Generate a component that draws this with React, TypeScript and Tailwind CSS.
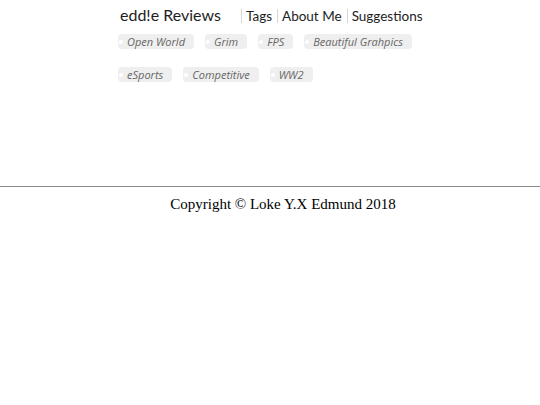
import React from 'react';

// 標籤資料：兩行
const tagRows: string[][] = [
  ['Open World', 'Grim', 'FPS', 'Beautiful Grahpics'],
  ['eSports', 'Competitive', 'WW2'],
];

const navLinks = ['Tags', 'About Me', 'Suggestions'];

const Tag: React.FC<{ label: string }> = ({ label }) => (
  <span
    className="relative inline-flex h-[15px] items-center whitespace-nowrap rounded-[4px] bg-[#efefef] pl-[9px] pr-[9px] text-[11px] italic leading-none text-[#666]"
    style={{ fontFamily: '"Open Sans", Lato, sans-serif' }}
  >
    {/* 左側小白點 */}
    <span className="absolute left-[1px] top-[6px] h-[4px] w-[4px] rounded-full bg-white" />
    {label}
  </span>
);

const App: React.FC = () => {
  return (
    <div className="min-h-[405px] w-full bg-white" style={{ fontFamily: 'Lato, "Open Sans", sans-serif' }}>
      <div className="mx-auto w-[304px]">
        {/* 頂部導覽 */}
        <header className="flex h-[29px] items-center">
          <span className="w-[123px] shrink-0 whitespace-nowrap pl-[2px] text-[16px] text-[#1e1e1e]">edd!e Reviews</span>
          <nav className="flex shrink-0 items-center whitespace-nowrap pt-[2px] text-[13.5px] text-[#222]">
            {navLinks.map((link) => (
              <span key={link} className="mr-[5px] border-l border-[#d6d6d6] pl-[4px] leading-[14px]">
                {link}
              </span>
            ))}
          </nav>
        </header>

        {/* 標籤區塊 */}
        <div className="mt-[5px] flex flex-col gap-[18px]">
          {tagRows.map((row, i) => (
            <div key={i} className="flex gap-[11px]">
              {row.map((t) => (
                <Tag key={t} label={t} />
              ))}
            </div>
          ))}
        </div>
      </div>

      {/* 頁尾 */}
      <footer className="mt-[104px]">
        <hr className="border-t border-[#8a8a8a]" />
        <p className="mt-[6px] pl-[26px] text-center text-[15px] text-black" style={{ fontFamily: '"Liberation Serif", serif' }}>
          Copyright © Loke Y.X Edmund 2018
        </p>
      </footer>
    </div>
  );
};

export default App;
